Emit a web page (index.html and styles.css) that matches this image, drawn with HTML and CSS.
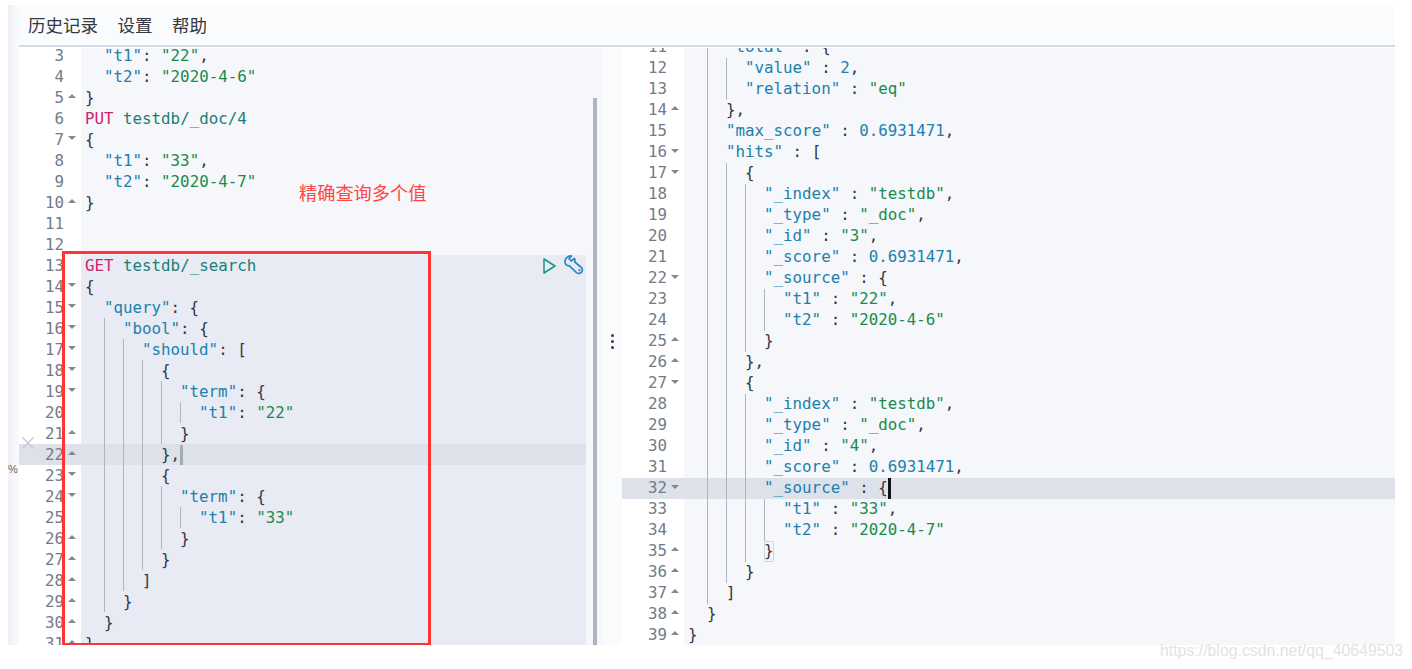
FILE: index.html
```html
<!DOCTYPE html>
<html lang="zh">
<head>
<meta charset="utf-8">
<title>Console</title>
<link rel="stylesheet" href="styles.css">
</head>
<body>
<div class="app">
  <div class="strip"><span class="pct">%</span></div>
  <div class="main">
    <nav class="topbar"><a>历史记录</a><a>设置</a><a>帮助</a></nav>
    <div class="panes">
      <section class="pane pane-left">
        <div class="lines lines-left">
          <div class="row"><div class="gut">3</div><div class="code"><span class="i"></span><span><span class="k">"t1"</span>: <span class="s">"22"</span>,</span></div></div>
          <div class="row"><div class="gut">4</div><div class="code"><span class="i"></span><span><span class="k">"t2"</span>: <span class="s">"2020-4-6"</span></span></div></div>
          <div class="row"><div class="gut up">5</div><div class="code"><span>}</span></div></div>
          <div class="row"><div class="gut">6</div><div class="code"><span><span class="m">PUT</span> <span class="u">testdb/_doc/4</span></span></div></div>
          <div class="row"><div class="gut down">7</div><div class="code"><span>{</span></div></div>
          <div class="row"><div class="gut">8</div><div class="code"><span class="i"></span><span><span class="k">"t1"</span>: <span class="s">"33"</span>,</span></div></div>
          <div class="row"><div class="gut">9</div><div class="code"><span class="i"></span><span><span class="k">"t2"</span>: <span class="s">"2020-4-7"</span></span></div></div>
          <div class="row"><div class="gut up">10</div><div class="code"><span>}</span></div></div>
          <div class="row"><div class="gut">11</div><div class="code"></div></div>
          <div class="row"><div class="gut">12</div><div class="code"></div></div>
          <div class="row sel"><div class="gut">13</div><div class="code"><span><span class="m">GET</span> <span class="u">testdb/_search</span></span></div></div>
          <div class="row sel"><div class="gut down">14</div><div class="code"><span>{</span></div></div>
          <div class="row sel"><div class="gut down">15</div><div class="code"><span class="i"></span><span><span class="k">"query"</span>: {</span></div></div>
          <div class="row sel"><div class="gut down">16</div><div class="code"><span class="i"></span><span class="g"></span><span><span class="k">"bool"</span>: {</span></div></div>
          <div class="row sel"><div class="gut down">17</div><div class="code"><span class="i"></span><span class="g"></span><span class="g"></span><span><span class="k">"should"</span>: [</span></div></div>
          <div class="row sel"><div class="gut down">18</div><div class="code"><span class="i"></span><span class="g"></span><span class="g"></span><span class="g"></span><span>{</span></div></div>
          <div class="row sel"><div class="gut down">19</div><div class="code"><span class="i"></span><span class="g"></span><span class="g"></span><span class="g"></span><span class="g"></span><span><span class="k">"term"</span>: {</span></div></div>
          <div class="row sel"><div class="gut">20</div><div class="code"><span class="i"></span><span class="g"></span><span class="g"></span><span class="g"></span><span class="g"></span><span class="g"></span><span><span class="k">"t1"</span>: <span class="s">"22"</span></span></div></div>
          <div class="row sel"><div class="gut up">21</div><div class="code"><span class="i"></span><span class="g"></span><span class="g"></span><span class="g"></span><span class="g"></span><span>}</span></div></div>
          <div class="row sel active"><div class="gut up">22</div><div class="code"><span class="i"></span><span class="g"></span><span class="g"></span><span class="g"></span><span>},<span class="caret-idle"></span></span></div></div>
          <div class="row sel"><div class="gut down">23</div><div class="code"><span class="i"></span><span class="g"></span><span class="g"></span><span class="g"></span><span>{</span></div></div>
          <div class="row sel"><div class="gut down">24</div><div class="code"><span class="i"></span><span class="g"></span><span class="g"></span><span class="g"></span><span class="g"></span><span><span class="k">"term"</span>: {</span></div></div>
          <div class="row sel"><div class="gut">25</div><div class="code"><span class="i"></span><span class="g"></span><span class="g"></span><span class="g"></span><span class="g"></span><span class="g"></span><span><span class="k">"t1"</span>: <span class="s">"33"</span></span></div></div>
          <div class="row sel"><div class="gut up">26</div><div class="code"><span class="i"></span><span class="g"></span><span class="g"></span><span class="g"></span><span class="g"></span><span>}</span></div></div>
          <div class="row sel"><div class="gut up">27</div><div class="code"><span class="i"></span><span class="g"></span><span class="g"></span><span class="g"></span><span>}</span></div></div>
          <div class="row sel"><div class="gut up">28</div><div class="code"><span class="i"></span><span class="g"></span><span class="g"></span><span>]</span></div></div>
          <div class="row sel"><div class="gut up">29</div><div class="code"><span class="i"></span><span class="g"></span><span>}</span></div></div>
          <div class="row sel"><div class="gut up">30</div><div class="code"><span class="i"></span><span>}</span></div></div>
          <div class="row sel"><div class="gut up">31</div><div class="code"><span>}</span></div></div>
        </div>
        <div class="scroll"><div class="thumb"></div></div>
        <div class="actions">
          <svg class="play" width="13" height="16" viewBox="0 0 13 16"><path d="M1 1 L12 8 L1 15 Z" fill="none" stroke="#1f9184" stroke-width="1.5" stroke-linejoin="round"/></svg>
          <svg class="wrench" width="20" height="20" viewBox="0 0 20 20"><path d="M7.5 1 C3.6 .6 .8 3.6 1 7 C1.2 9.2 3 10.8 5.4 10.8 L12 17.2 C13.6 19 17 18.6 18 16.4 C19 14.2 18 12.8 16.8 12 L10.8 7 C11.2 5.8 11 4.4 10.4 3.4 L7.4 6 L5 3.6 Z" fill="none" stroke="#2a86c8" stroke-width="1.7" stroke-linejoin="round"/><circle cx="15.4" cy="15.2" r="1.1" fill="#2a86c8"/></svg>
        </div>
        <svg class="close" width="12" height="12" viewBox="0 0 12 12"><path d="M.5 .5 L11.5 11.5 M11.5 .5 L.5 11.5" stroke="#c3c8cf" stroke-width="1.2"/></svg>
        <div class="redbox"></div>
        <div class="note">精确查询多个值</div>
      </section>
      <div class="divider"><i></i><i></i><i></i></div>
      <section class="pane pane-right">
        <div class="lines lines-right">
          <div class="row"><div class="gut down">11</div><div class="code"><span class="i"></span><span class="g"></span><span><span class="k">"total"</span> : {</span></div></div>
          <div class="row"><div class="gut">12</div><div class="code"><span class="i"></span><span class="g"></span><span class="g"></span><span><span class="k">"value"</span> : <span class="n">2</span>,</span></div></div>
          <div class="row"><div class="gut">13</div><div class="code"><span class="i"></span><span class="g"></span><span class="g"></span><span><span class="k">"relation"</span> : <span class="s">"eq"</span></span></div></div>
          <div class="row"><div class="gut up">14</div><div class="code"><span class="i"></span><span class="g"></span><span>},</span></div></div>
          <div class="row"><div class="gut">15</div><div class="code"><span class="i"></span><span class="g"></span><span><span class="k">"max_score"</span> : <span class="n">0.6931471</span>,</span></div></div>
          <div class="row"><div class="gut down">16</div><div class="code"><span class="i"></span><span class="g"></span><span><span class="k">"hits"</span> : [</span></div></div>
          <div class="row"><div class="gut down">17</div><div class="code"><span class="i"></span><span class="g"></span><span class="g"></span><span>{</span></div></div>
          <div class="row"><div class="gut">18</div><div class="code"><span class="i"></span><span class="g"></span><span class="g"></span><span class="g"></span><span><span class="k">"_index"</span> : <span class="s">"testdb"</span>,</span></div></div>
          <div class="row"><div class="gut">19</div><div class="code"><span class="i"></span><span class="g"></span><span class="g"></span><span class="g"></span><span><span class="k">"_type"</span> : <span class="s">"_doc"</span>,</span></div></div>
          <div class="row"><div class="gut">20</div><div class="code"><span class="i"></span><span class="g"></span><span class="g"></span><span class="g"></span><span><span class="k">"_id"</span> : <span class="s">"3"</span>,</span></div></div>
          <div class="row"><div class="gut">21</div><div class="code"><span class="i"></span><span class="g"></span><span class="g"></span><span class="g"></span><span><span class="k">"_score"</span> : <span class="n">0.6931471</span>,</span></div></div>
          <div class="row"><div class="gut down">22</div><div class="code"><span class="i"></span><span class="g"></span><span class="g"></span><span class="g"></span><span><span class="k">"_source"</span> : {</span></div></div>
          <div class="row"><div class="gut">23</div><div class="code"><span class="i"></span><span class="g"></span><span class="g"></span><span class="g"></span><span class="g"></span><span><span class="k">"t1"</span> : <span class="s">"22"</span>,</span></div></div>
          <div class="row"><div class="gut">24</div><div class="code"><span class="i"></span><span class="g"></span><span class="g"></span><span class="g"></span><span class="g"></span><span><span class="k">"t2"</span> : <span class="s">"2020-4-6"</span></span></div></div>
          <div class="row"><div class="gut up">25</div><div class="code"><span class="i"></span><span class="g"></span><span class="g"></span><span class="g"></span><span>}</span></div></div>
          <div class="row"><div class="gut up">26</div><div class="code"><span class="i"></span><span class="g"></span><span class="g"></span><span>},</span></div></div>
          <div class="row"><div class="gut down">27</div><div class="code"><span class="i"></span><span class="g"></span><span class="g"></span><span>{</span></div></div>
          <div class="row"><div class="gut">28</div><div class="code"><span class="i"></span><span class="g"></span><span class="g"></span><span class="g"></span><span><span class="k">"_index"</span> : <span class="s">"testdb"</span>,</span></div></div>
          <div class="row"><div class="gut">29</div><div class="code"><span class="i"></span><span class="g"></span><span class="g"></span><span class="g"></span><span><span class="k">"_type"</span> : <span class="s">"_doc"</span>,</span></div></div>
          <div class="row"><div class="gut">30</div><div class="code"><span class="i"></span><span class="g"></span><span class="g"></span><span class="g"></span><span><span class="k">"_id"</span> : <span class="s">"4"</span>,</span></div></div>
          <div class="row"><div class="gut">31</div><div class="code"><span class="i"></span><span class="g"></span><span class="g"></span><span class="g"></span><span><span class="k">"_score"</span> : <span class="n">0.6931471</span>,</span></div></div>
          <div class="row active"><div class="gut down">32</div><div class="code"><span class="i"></span><span class="g"></span><span class="g"></span><span class="g"></span><span><span class="k">"_source"</span> : {<span class="caret"></span></span></div></div>
          <div class="row"><div class="gut">33</div><div class="code"><span class="i"></span><span class="g"></span><span class="g"></span><span class="g"></span><span class="g"></span><span><span class="k">"t1"</span> : <span class="s">"33"</span>,</span></div></div>
          <div class="row"><div class="gut">34</div><div class="code"><span class="i"></span><span class="g"></span><span class="g"></span><span class="g"></span><span class="g"></span><span><span class="k">"t2"</span> : <span class="s">"2020-4-7"</span></span></div></div>
          <div class="row"><div class="gut up">35</div><div class="code"><span class="i"></span><span class="g"></span><span class="g"></span><span class="g"></span><span class="match">}</span></div></div>
          <div class="row"><div class="gut up">36</div><div class="code"><span class="i"></span><span class="g"></span><span class="g"></span><span>}</span></div></div>
          <div class="row"><div class="gut up">37</div><div class="code"><span class="i"></span><span class="g"></span><span>]</span></div></div>
          <div class="row"><div class="gut up">38</div><div class="code"><span class="i"></span><span>}</span></div></div>
          <div class="row"><div class="gut up">39</div><div class="code"><span>}</span></div></div>
        </div>
      </section>
    </div>
  </div>
</div>
<div class="watermark">https://blog.csdn.net/qq_40649503</div>
</body>
</html>
```

FILE: styles.css
```css
html, body {
  height: 100%;
}
body {
  margin: 0;
  padding: 5px 0 0 8px;
  box-sizing: border-box;
  background: #fff;
  overflow: hidden;
  position: relative;
}
.app {
  display: flex;
  width: 1387px;
  height: 640px;
}
.strip {
  width: 11px;
  flex: none;
  position: relative;
  background: linear-gradient(to right, #eef0f5, #fafbfd);
}
.pct {
  position: absolute;
  left: 0;
  top: 458px;
  font: 11px/13px "Liberation Sans", sans-serif;
  color: #666;
}
.main {
  flex: 1;
  display: flex;
  flex-direction: column;
  min-width: 0;
}
.topbar {
  height: 42px;
  flex: none;
  box-sizing: border-box;
  display: flex;
  align-items: center;
  gap: 19.5px;
  padding: 0 0 1px 9px;
  background: #fafbfd;
  border-bottom: 2px solid #d3dae6;
  font: 17.5px/24px "Noto Sans CJK SC", sans-serif;
  color: #343741;
}
.panes {
  flex: 1;
  display: flex;
  min-height: 0;
  margin-top: 1px;
}
.pane {
  position: relative;
  display: flex;
  overflow: hidden;
  background: #f5f7fa;
}
.pane-left {
  width: 584px;
  flex: none;
}
.pane-right {
  flex: 1;
}
.lines {
  font: 15.8px/21px "DejaVu Sans Mono", monospace;
  color: #343741;
}
.lines-left {
  width: 567px;
  flex: none;
  margin-top: -3px;
}
.lines-right {
  flex: 1;
  margin-top: -11px;
}
.row {
  display: flex;
  height: 21px;
}
.gut {
  width: 62px;
  flex: none;
  box-sizing: border-box;
  display: flex;
  justify-content: flex-end;
  align-items: center;
  padding-right: 5px;
  background: #fff;
  color: #737a88;
}
.gut::after {
  content: "";
  align-self: flex-start;
  width: 0;
  height: 0;
  margin: 7px 0 0 4px;
  border-left: 4px solid transparent;
  border-right: 4px solid transparent;
}
.lines-right .gut {
  padding-bottom: 2px;
}
.lines-right .gut.up::after {
  margin-top: 6px;
}
.lines-right .code {
  line-height: 19px;
}
.gut.up::after {
  border-bottom: 4px solid #83878e;
}
.gut.down::after {
  border-top: 4px solid #83878e;
}
.code {
  flex: 1;
  display: flex;
  padding-left: 4px;
  white-space: pre;
  min-width: 0;
}
.i, .g {
  width: 2ch;
  height: 21px;
  flex: none;
  box-sizing: border-box;
}
.g {
  border-left: 1px solid #aeb4c0;
}
.sel .code {
  background: #e8ebf3;
}
.active .gut, .active .code {
  background: #dce1ea;
}
.k { color: #2080ad; }
.s { color: #1a8a4c; }
.n { color: #2080ad; }
.m { color: #c9246f; }
.u { color: #187f78; }
.caret-idle {
  display: inline-block;
  width: 3px;
  height: 20px;
  vertical-align: bottom;
  background: #a8acb2;
}
.caret {
  display: inline-block;
  width: 3px;
  height: 21px;
  margin-bottom: -2px;
  vertical-align: top;
  background: #111;
}
.match {
  box-shadow: inset 0 0 0 1px #cfd5de;
  border-radius: 2px;
}
.scroll {
  flex: 1;
  padding: 50px 0 0 7px;
  box-sizing: border-box;
  display: flex;
}
.thumb {
  width: 4px;
  background: #aeb3bd;
}
.actions {
  position: absolute;
  left: 524px;
  top: 207px;
  display: flex;
  align-items: flex-start;
  gap: 8px;
}
.play {
  margin-top: 3px;
}
.close {
  position: absolute;
  left: 3px;
  top: 389px;
}
.redbox {
  position: absolute;
  left: 43px;
  top: 203px;
  width: 369px;
  height: 394px;
  box-sizing: border-box;
  border: 3px solid #ff3535;
  border-bottom-width: 2px;
}
.note {
  position: absolute;
  left: 280px;
  top: 131px;
  font: 18.2px/26px "Noto Sans CJK SC", sans-serif;
  color: #ff4545;
}
.divider {
  width: 19px;
  flex: none;
  background: #fafbfd;
  display: flex;
  flex-direction: column;
  align-items: center;
  justify-content: center;
  gap: 3px;
  padding-bottom: 10px;
  box-sizing: border-box;
}
.divider i {
  width: 3px;
  height: 3px;
  border-radius: 50%;
  background: #3a3d44;
}
.watermark {
  position: absolute;
  left: 1160px;
  top: 641px;
  font: 15.85px/20px "Liberation Sans", sans-serif;
  color: #e3e3e3;
  white-space: nowrap;
}
```
